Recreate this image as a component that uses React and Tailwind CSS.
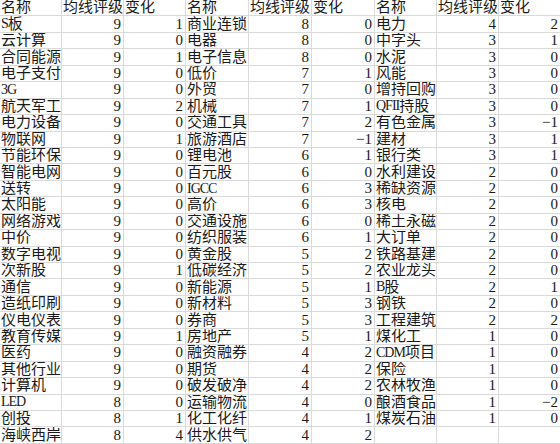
import React from "react";

const g1 = [
  ["S板", 9, 1], ["云计算", 9, 0], ["合同能源", 9, 1], ["电子支付", 9, 0], ["3G", 9, 0],
  ["航天军工", 9, 2], ["电力设备", 9, 0], ["物联网", 9, 1], ["节能环保", 9, 0], ["智能电网", 9, 0],
  ["送转", 9, 0], ["太阳能", 9, 0], ["网络游戏", 9, 0], ["中价", 9, 0], ["数字电视", 9, 0],
  ["次新股", 9, 1], ["通信", 9, 0], ["造纸印刷", 9, 0], ["仪电仪表", 9, 0], ["教育传媒", 9, 1],
  ["医药", 9, 0], ["其他行业", 9, 0], ["计算机", 9, 0], ["LED", 8, 0], ["创投", 8, 1],
  ["海峡西岸", 8, 4],
];
const g2 = [
  ["商业连锁", 8, 0], ["电器", 8, 0], ["电子信息", 8, 0], ["低价", 7, 1], ["外贸", 7, 0],
  ["机械", 7, 1], ["交通工具", 7, 2], ["旅游酒店", 7, -1], ["锂电池", 6, 1], ["百元股", 6, 0],
  ["IGCC", 6, 3], ["高价", 6, 3], ["交通设施", 6, 0], ["纺织服装", 6, 1], ["黄金股", 5, 2],
  ["低碳经济", 5, 2], ["新能源", 5, 1], ["新材料", 5, 3], ["券商", 5, 3], ["房地产", 5, 1],
  ["融资融券", 4, 2], ["期货", 4, 2], ["破发破净", 4, 2], ["运输物流", 4, 0], ["化工化纤", 4, 1],
  ["供水供气", 4, 2],
];
const g3 = [
  ["电力", 4, 2], ["中字头", 3, 1], ["水泥", 3, 0], ["风能", 3, 0], ["增持回购", 3, 0],
  ["QFII持股", 3, 0], ["有色金属", 3, -1], ["建材", 3, 1], ["银行类", 3, 1], ["水利建设", 2, 0],
  ["稀缺资源", 2, 0], ["核电", 2, 0], ["稀土永磁", 2, 0], ["大订单", 2, 0], ["铁路基建", 2, 0],
  ["农业龙头", 2, 0], ["B股", 2, 1], ["钢铁", 2, 0], ["工程建筑", 2, 2], ["煤化工", 1, 0],
  ["CDM项目", 1, 0], ["保险", 1, 0], ["农林牧渔", 1, 0], ["酿酒食品", 1, -2], ["煤炭石油", 1, 0],
  ["", "", ""],
];

const fmt = (v) => (typeof v === "number" && v < 0 ? "\u2212" + Math.abs(v) : v);

function Name({ text }) {
  const parts = String(text).match(/[\x00-\x7f]+|[^\x00-\x7f]+/g) || [];
  return parts.map((p, i) =>
    /^[\x00-\x7f]+$/.test(p) ? (
      <span key={i} className="text-[14px] tracking-[-1px]">{p}</span>
    ) : (
      <span key={i}>{p}</span>
    )
  );
}

function Cell({ children, right }) {
  return (
    <div
      className={
        "h-[16.44px] border-r border-b border-[#dadada] flex items-center overflow-hidden whitespace-nowrap text-[15px] leading-none text-[#1a1a1a] " +
        (right ? "justify-end pr-[2px]" : "justify-start pl-[1px]")
      }
    >
      {children}
    </div>
  );
}

export default function App() {
  const rows = [];
  rows.push(
    ["名称", "均线评级", "变化", "名称", "均线评级", "变化", "名称", "均线评级", "变化"].map((h, i) => (
      <Cell key={"h" + i}>{h}</Cell>
    ))
  );
  for (let r = 0; r < 26; r++) {
    const cells = [];
    [g1, g2, g3].forEach((g, gi) => {
      const [n, a, b] = g[r];
      cells.push(
        <Cell key={r + "-" + gi + "n"}>
          <Name text={n} />
        </Cell>
      );
      cells.push(<Cell key={r + "-" + gi + "a"} right>{fmt(a)}</Cell>);
      cells.push(<Cell key={r + "-" + gi + "b"} right>{fmt(b)}</Cell>);
    });
    rows.push(cells);
  }
  return (
    <div
      className="w-[560px] h-[444px] overflow-hidden bg-white"
      style={{ fontFamily: '"Liberation Serif", "Noto Sans CJK SC", serif' }}
    >
      <div className="grid grid-cols-[62px_62px_62px_63px_63px_63px_62px_62px_62px] w-[561px]">
        {rows.flat()}
      </div>
    </div>
  );
}
